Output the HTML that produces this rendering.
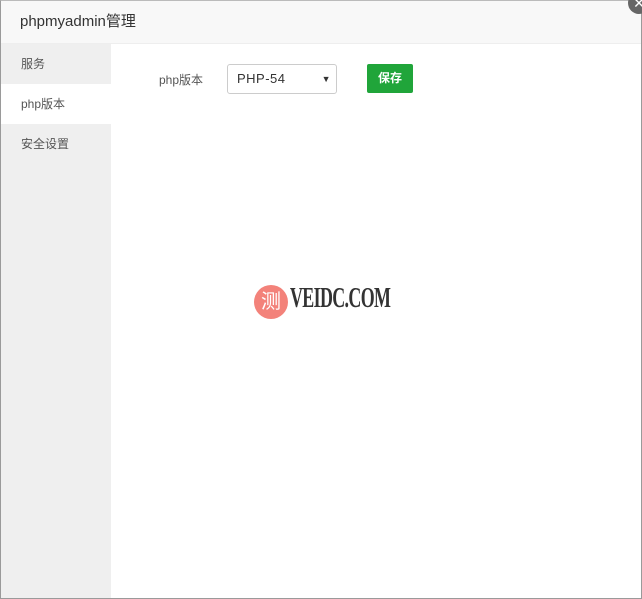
<!DOCTYPE html>
<html><head><meta charset="utf-8"><style>
body{margin:0;width:642px;height:599px;overflow:hidden;background:#fff;font-family:"Liberation Sans","Noto Sans CJK SC",sans-serif;position:relative}
.win{position:absolute;left:0;top:0;width:640px;height:597px;border:1px solid #9a9a9a;border-top:1px solid #bbb;background:#fff}
.hd{height:42px;background:#f8f8f8;border-bottom:1px solid #eee;font-size:15px;color:#333;line-height:42px;padding-left:19px}
.side{position:absolute;left:0;top:43px;width:110px;bottom:0;background:#efefef}
.side div{height:40px;line-height:40px;padding-left:20px;font-size:12px;color:#555}
.side .on{background:#fff}
.close{position:absolute;right:-8px;top:-8px;width:22px;height:22px;border-radius:50%;background:#666;color:#fff;font-size:14px;text-align:center;line-height:22px}
.lbl{position:absolute;left:158px;top:70px;font-size:12px;color:#555}
.sel{position:absolute;left:226px;top:63px;width:110px;height:30px;border:1px solid #ccc;border-radius:3px;box-sizing:border-box;font-size:13px;color:#333;line-height:28px;padding-left:9px;letter-spacing:0.5px}
.sel span{position:absolute;right:5px;top:0;font-size:9px}
.btn{position:absolute;left:366px;top:63px;width:46px;height:29px;background:#20a53a;border-radius:2px;color:#fff;font-size:12px;text-align:center;line-height:29px;font-weight:bold}
.logo{position:absolute;left:253px;top:284px;width:34px;height:34px;border-radius:50%;background:#f3827a;color:#fff;font-size:20px;line-height:34px;text-align:center}
.wm{position:absolute;left:289px;top:282px;font-family:"Liberation Serif",serif;font-weight:bold;font-size:28px;color:#333;letter-spacing:-1px;transform:scaleX(0.64);transform-origin:left}
</style></head><body>
<div class="win">
<div class="hd">phpmyadmin管理</div>
<div class="side"><div>服务</div><div class="on">php版本</div><div>安全设置</div></div>
<div class="lbl">php版本</div>
<div class="sel">PHP-54<span>▼</span></div>
<div class="btn">保存</div>
<div class="logo">测</div>
<div class="wm">VEIDC.COM</div>
</div>
<div class="close">✕</div>
</body></html>
